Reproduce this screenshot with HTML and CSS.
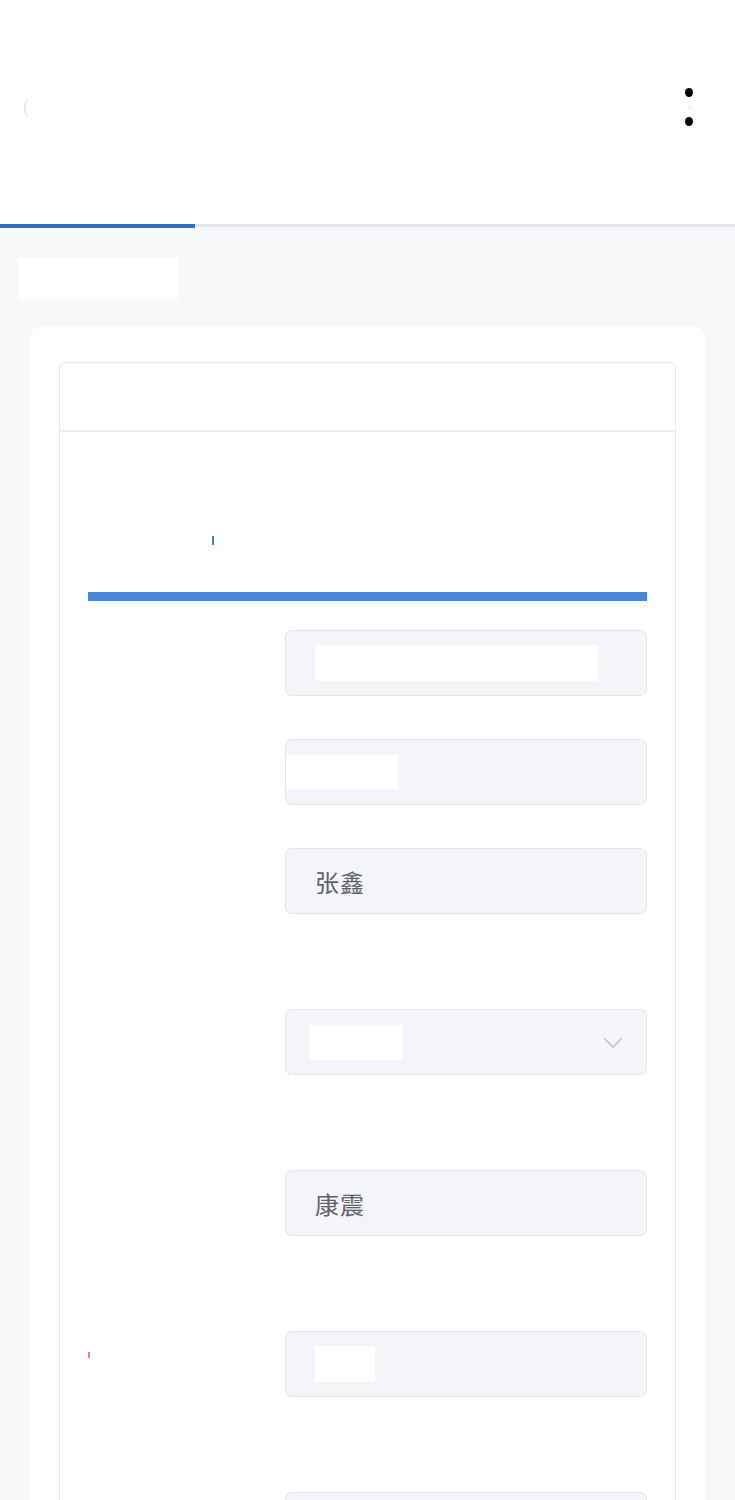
FILE: index.html
```html
<!DOCTYPE html>
<html lang="zh-CN">
<head>
<meta charset="utf-8">
<title>表单</title>
<link rel="stylesheet" href="styles.css">
</head>
<body>
<header class="topbar">
  <div class="nav">
    <span class="back"></span>
    <span class="kebab"><i></i><i class="mid"></i><i></i></span>
  </div>
  <div class="tabs">
    <div class="tab active"></div>
    <div class="tab"></div>
    <div class="tab"></div>
  </div>
</header>
<main class="page">
  <div class="page-title"><span class="mask title-mask"></span></div>
  <section class="card">
    <div class="panel">
      <div class="panel-head"></div>
      <div class="panel-body">
        <div class="doc-title"><span class="caret"></span></div>
        <div class="bar"></div>
        <div class="row">
          <div class="label"></div>
          <div class="field"><span class="mask m1"></span></div>
        </div>
        <div class="row">
          <div class="label"></div>
          <div class="field"><span class="mask m2"></span></div>
        </div>
        <div class="row tall">
          <div class="label"></div>
          <div class="field"><span class="value">张鑫</span></div>
        </div>
        <div class="row tall">
          <div class="label"></div>
          <div class="field select"><span class="mask m3"></span>
            <svg class="chev" width="20" height="11" viewBox="0 0 20 11"><path d="M1 1 L10 10 L19 1" fill="none" stroke="#b8bcc4" stroke-width="1.4"/></svg>
          </div>
        </div>
        <div class="row tall">
          <div class="label"></div>
          <div class="field"><span class="value">康震</span></div>
        </div>
        <div class="row tall">
          <div class="label"><span class="req"></span></div>
          <div class="field"><span class="mask m4"></span></div>
        </div>
        <div class="row">
          <div class="label"></div>
          <div class="field"></div>
        </div>
      </div>
    </div>
  </section>
</main>
</body>
</html>
```
FILE: styles.css
```css
* { box-sizing: border-box; }
html, body { margin: 0; padding: 0; }
body {
  background: #f7f8fa;
  font-family: "Noto Sans CJK SC", "Noto Sans", sans-serif;
  width: 735px;
  overflow: hidden;
}
.topbar {
  background: #ffffff;
  height: 227px;
  display: flex;
  flex-direction: column;
}
.nav {
  height: 160px;
  padding-top: 88px;
  display: flex;
  justify-content: space-between;
  align-items: flex-start;
  padding-left: 24px;
  padding-right: 42px;
}
.back {
  width: 8px;
  height: 20px;
  margin-top: 10px;
  border-left: 2px solid #e6e6e6;
  border-radius: 10px 0 0 10px;
}
.kebab {
  display: flex;
  flex-direction: column;
  align-items: center;
  gap: 8px;
}
.kebab i {
  display: block;
  width: 8px;
  height: 9px;
  border-radius: 50%;
  background: #000;
}
.kebab i.mid {
  width: 1px;
  height: 4px;
  background: #e0e0e0;
  border-radius: 0;
}
.tabs {
  margin-top: auto;
  display: flex;
  height: 67px;
  border-bottom: 3px solid #e3e7ed;
}
.tab { flex: 1; position: relative; }
.tab.active::after {
  content: "";
  position: absolute;
  left: 0;
  width: 195px;
  bottom: -4px;
  height: 4px;
  background: #2f6fc0;
}
.page { padding: 31px 30px 0 30px; }
.page-title { height: 69px; margin-left: -12px; }
.mask { display: block; background: #ffffff; }
.title-mask { width: 160px; height: 42px; }
.card {
  background: #ffffff;
  border-radius: 10px;
  padding: 35px 29px 0 29px;
  height: 1300px;
}
.panel {
  border: 1px solid #e6e8eb;
  border-radius: 6px 6px 0 0;
  height: 1300px;
}
.panel-head {
  height: 69px;
  border-bottom: 2px solid #eceef1;
}
.panel-body { padding: 0 28px; }
.doc-title {
  height: 160px;
  padding: 104px 0 0 124px;
}
.caret {
  display: block;
  width: 2px;
  height: 9px;
  background: #4a7fc8;
}
.bar {
  height: 9px;
  background: #4a86d8;
  margin-bottom: 29px;
}
.row {
  display: grid;
  grid-template-columns: 197px 1fr;
  margin-bottom: 43px;
}
.row.tall { margin-bottom: 95px; }
.label { position: relative; }
.req {
  position: absolute;
  left: 0;
  top: 21px;
  width: 2px;
  height: 6px;
  background: #f08080;
}
.field {
  height: 66px;
  background: #f4f5f8;
  border: 1.5px solid #e2e4e9;
  border-radius: 7px;
  display: flex;
  align-items: center;
  padding-left: 29px;
  padding-right: 22px;
  position: relative;
}
.value {
  font-size: 24px;
  color: #606266;
  letter-spacing: 1px;
}
.m1 { width: 283px; height: 36px; }
.m2 { width: 112px; height: 34px; margin-left: -29px; }
.m3 { width: 92px; height: 35px; margin-left: -5px; }
.m4 { width: 60px; height: 36px; }
.select { justify-content: space-between; }
.chev { margin-right: 1px; }
```
